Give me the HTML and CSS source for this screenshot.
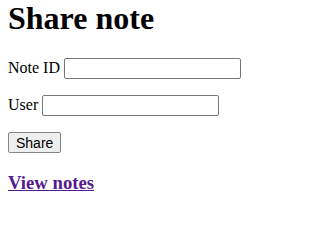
FILE: index.html
```html
<!DOCTYPE html>
<html>
<head>
<meta charset="utf-8">
<title>Share note</title>
<link rel="stylesheet" href="styles.css">
</head>
<body class="page">
<h1 class="title">Share note</h1>
<form class="share-form">
<p class="row"><label class="label">Note ID</label> <input class="field" type="text"></p>
<p class="row"><label class="label">User</label> <input class="field" type="text"></p>
<p class="row"><button class="btn" type="button">Share</button></p>
</form>
<h3 class="nav"><a class="nav-link" href="#">View notes</a></h3>
</body>
</html>
```
FILE: styles.css
```css
html, body {
  background: #fff;
}
.page {
  margin: 0 8px;
  font-family: "Liberation Serif", "Times New Roman", serif;
  font-size: 16px;
  color: #000;
}
.title {
  font-size: 32px;
  font-weight: bold;
  margin: 0 0 21.44px;
}
.share-form {
  margin: 0;
}
.row {
  margin: 16px 0;
}
.field {
  box-sizing: border-box;
  width: 177px;
  height: 21px;
  padding: 1px 2px;
  border: 1px solid #767676;
  border-radius: 2px;
  font-family: "Liberation Sans", Arial, sans-serif;
  font-size: 13.33px;
  background: #fff;
}
.btn {
  box-sizing: border-box;
  height: 21px;
  padding: 1px 7px;
  border: 1px solid #858585;
  border-radius: 2px;
  background: #efefef;
  color: #000;
  font-family: "Liberation Sans", Arial, sans-serif;
  font-size: 14px;
}
.nav {
  font-size: 18.72px;
  margin: 18.72px 0;
}
.nav-link {
  color: #551a8b;
}
```
